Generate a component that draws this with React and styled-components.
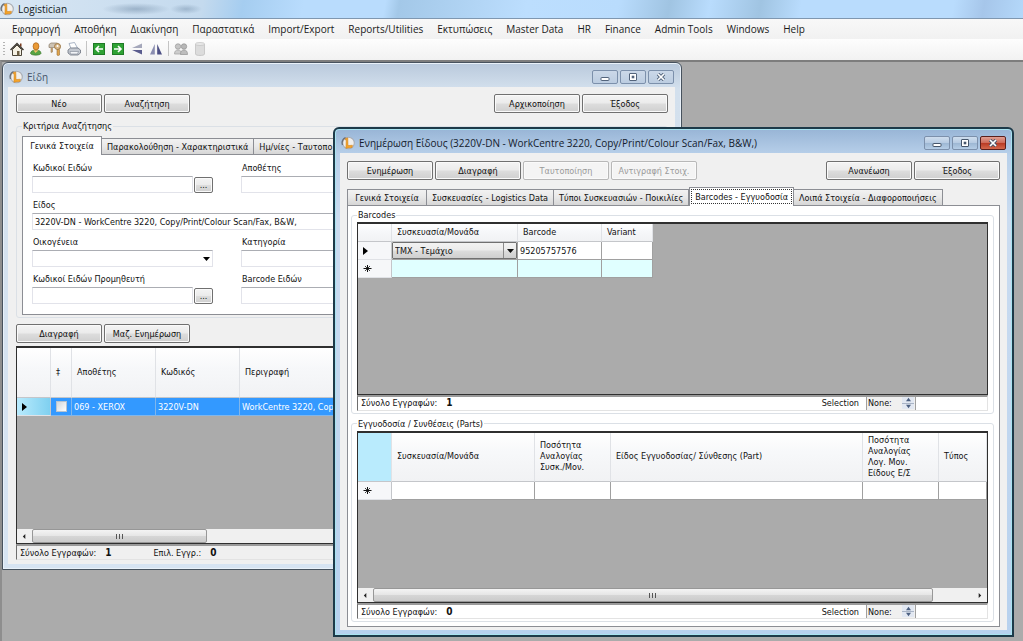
import React, { useState } from "react";
import styled, { createGlobalStyle, css } from "styled-components";

const GlobalStyle = createGlobalStyle`
  * {
    box-sizing: border-box;
  }
  body {
    margin: 0;
    font-family: "DejaVu Sans Condensed", "Liberation Sans", Arial, sans-serif;
    font-size: 9px;
    line-height: 12px;
    color: #111;
    background: #ababab;
  }
  button, input, select {
    font: inherit;
    color: inherit;
  }
`;

const uiFont = '"Open Sans", "Noto Sans", sans-serif';

const Shell = styled.div`
  display: flex;
  flex-direction: column;
  min-height: 100vh;
`;

const AppTitle = styled.header`
  display: flex;
  align-items: center;
  gap: 4px;
  height: 19px;
  border-bottom: 1px solid #7f97b0;
  font-family: ${uiFont};
  font-size: 10px;
  color: #101820;
  background:
    radial-gradient(ellipse 34px 6px at 136px 9px, rgba(84, 112, 142, 0.4), transparent),
    radial-gradient(ellipse 16px 5px at 186px 9px, rgba(84, 112, 142, 0.35), transparent),
    linear-gradient(100deg, #d8e6f3 0, #c4daee 200px, #a5cdf0 240px, #b9dcfd 300px, #b9dcfd 380px, #a3c8e8 394px, #b2d5f5 470px, #bcdefe 520px, #b9dcfd 610px, #a0c4e2 660px, #b9dcfd 700px, #a0c4e2 750px, #b9dcfd 790px, #b9dcfd 940px, #a6c6ea 970px, #b4d8fa 100%);
`;

const MenuBar = styled.nav`
  display: flex;
  align-items: center;
  gap: 14px;
  height: 20px;
  padding-left: 12px;
  font-family: ${uiFont};
  font-size: 10px;
  background: linear-gradient(#f8f8f8, #f1f1f1);
`;

const MenuItem = styled.a`
  color: #1a1a1a;
  text-decoration: none;
  white-space: nowrap;
`;

const Toolbar = styled.div`
  display: flex;
  align-items: center;
  gap: 5px;
  height: 21px;
  padding: 0 0 2px 3px;
  background: linear-gradient(#fdfdfd, #f2f2f2);
`;

const Grip = styled.span`
  width: 2px;
  height: 14px;
  background: repeating-linear-gradient(#b4b4b4 0 1px, transparent 1px 3px);
`;

const ToolButton = styled.button`
  display: flex;
  width: 14px;
  height: 16px;
  padding: 1px 0;
  border: 0;
  background: none;
`;

const ToolDivider = styled.span`
  width: 1px;
  height: 15px;
  background: #c4c4c4;
`;

const Desktop = styled.main`
  position: relative;
  flex: 1;
  min-height: 580px;
  border-top: 2px solid #7d7d7d;
  border-left: 2px solid #8e8e8e;
  background: #ababab;
  overflow: hidden;
`;

const Window = styled.section`
  position: absolute;
  display: flex;
  flex-direction: column;
  padding: 0 6px 5px 5px;
  border: 1px solid #47525e;
  border-radius: 6px 6px 0 0;
  background: linear-gradient(#b9c9dc, #d3e0ed 26px, #d7e4f2);
  box-shadow: inset 0 0 0 1px #e9f1f9;

  ${(p) =>
    p.$active &&
    css`
      border: 2px solid #1d3a49;
      padding: 0 5px 5px 5px;
      background: linear-gradient(#98b5d6, #b8d0ea 26px, #cbdcf0 90px, #b7d1ee);
      box-shadow: inset 0 0 0 1px #a9e3f0;
    `}
`;

const ItemsWindow = styled(Window)`
  top: 0;
  left: 0;
  bottom: 71px;
  width: 680px;
  max-width: 100%;
`;

const EditWindow = styled(Window)`
  top: 65px;
  left: 331px;
  right: 9px;
  bottom: 4px;
`;

const WindowTitle = styled.header`
  display: flex;
  align-items: center;
  gap: 4px;
  height: 24px;
  padding: 4px 1px 0 1px;
  font-family: ${uiFont};
  font-size: 10px;
  color: ${(p) => (p.$active ? "#14202c" : "#46566a")};

  h2 {
    flex: 1;
    margin: 0;
    font-size: inherit;
    font-weight: 400;
    white-space: nowrap;
  }
`;

const CaptionButton = styled.button`
  display: flex;
  align-items: center;
  justify-content: center;
  width: 26px;
  height: 14px;
  margin-left: -2px;
  padding: 0;
  border: 1px solid ${(p) => (p.$danger ? "#5a1f1c" : "#7c90ab")};
  border-radius: 2px;
  background: ${(p) =>
    p.$danger
      ? "linear-gradient(#e0a095, #cf6a58 48%, #b93a24 52%, #d4684c)"
      : p.$active
      ? "linear-gradient(#cfdeee, #b7cbe2 48%, #9db7d3 52%, #b5cde6)"
      : "linear-gradient(#cbd8e8, #bccde1)"};
`;

const WindowBody = styled.div`
  flex: 1;
  display: flex;
  flex-direction: column;
  min-height: 0;
  padding: ${(p) => (p.$active ? "8px 7px 3px" : "7px 7px 4px 8px")};
  background: #f0f0f0;
`;

const ButtonRow = styled.div`
  display: flex;
  gap: 2px;
`;

const Spacer = styled.span`
  flex: 1;
`;

const PushButton = styled.button`
  width: 86px;
  height: 19px;
  padding: 0;
  border: 1px solid #707070;
  border-radius: 2px;
  background: linear-gradient(#f4f4f4, #ebebeb 48%, #dddddd 52%, #cfcfcf);
  box-shadow: inset 0 0 0 1px #fafafa;
  white-space: nowrap;

  &:disabled {
    color: #9a9a9a;
    border-color: #b8b8b8;
    background: #f4f4f4;
  }
`;

const Group = styled.fieldset`
  display: flex;
  flex-direction: column;
  min-width: 0;
  min-height: 0;
  margin: 0;
  padding: ${(p) => p.$pad || "1px 5px 2px"};
  border: 1px solid #dbe0e6;
  border-radius: 3px;
  flex: ${(p) => (p.$grow ? "1 1 0" : "none")};

  legend {
    padding: 0 1px;
    white-space: nowrap;
  }
`;

const TabList = styled.div`
  display: flex;
  align-items: flex-end;
  height: 18px;
`;

const Tab = styled.button`
  min-width: 80px;
  height: 16px;
  padding: 0 5px;
  border: 1px solid #8c8e94;
  border-left-width: ${(p) => (p.$first || p.$selected ? "1px" : "0")};
  border-bottom: 0;
  background: linear-gradient(#f2f2f2, #e8e8e8 50%, #d6d6d6);
  white-space: nowrap;

  ${(p) =>
    p.$selected &&
    css`
      height: 19px;
      margin-bottom: -1px;
      padding-bottom: 1px;
      background: #fff;
      z-index: 1;
    `}
  ${(p) =>
    p.$focused &&
    css`
      outline: 1px dotted #333;
      outline-offset: -3px;
    `}
`;

const TabPanel = styled.div`
  display: flex;
  flex-direction: column;
  flex: 1;
  min-height: 0;
  padding: ${(p) => p.$pad};
  border: 1px solid #8c8e94;
  background: #fff;
`;

const FieldGrid = styled.div`
  display: grid;
  grid-template-columns: 181px 1fr;
  column-gap: 28px;
  row-gap: 6px;
`;

const Field = styled.div`
  display: flex;
  flex-direction: column;
  gap: 1px;
  grid-column: ${(p) => (p.$wide ? "1 / -1" : "auto")};

  label {
    padding-left: 1px;
    line-height: 13px;
  }
`;

const InputRow = styled.div`
  position: relative;
  display: flex;
  align-items: center;
  gap: 1px;
  height: 17px;
`;

const TextInput = styled.input`
  flex: 1;
  min-width: 0;
  height: 17px;
  padding: 0 2px;
  border: 1px solid #e2e3ea;
  border-top-color: #abadb3;
  background: #fff;
`;

const LookupButton = styled(PushButton)`
  width: 19px;
  height: 16px;
  line-height: 10px;
`;

const Select = styled.select`
  appearance: none;
  width: 100%;
  height: 17px;
  padding: 0 14px 0 2px;
  border: 1px solid #e2e3ea;
  border-top-color: #abadb3;
  border-radius: 0;
  background: #fff;
`;

const SelectArrow = styled.svg`
  position: absolute;
  right: 3px;
  top: 7px;
  pointer-events: none;
`;

const GridFrame = styled.div`
  display: flex;
  flex-direction: column;
  flex: 1;
  min-height: 0;
  border: 1px solid #2f2f2f;
  border-top-width: 2px;
  background: #ababab;
  overflow: hidden;
`;

const GridArea = styled.div`
  flex: 1;
  min-height: 0;
  overflow: hidden;
`;

const DataTable = styled.table`
  width: ${(p) => p.$width};
  table-layout: fixed;
  border-collapse: separate;
  border-spacing: 0;

  th, td {
    padding: 0 2px;
    overflow: hidden;
    white-space: nowrap;
    text-align: left;
    font-weight: 400;
    border-right: 1px solid #a0a0a0;
    border-bottom: 1px solid #a0a0a0;
  }
  thead th {
    height: ${(p) => p.$head}px;
    padding: 0 5px;
    line-height: 11px;
    white-space: pre-line;
    border-right-color: #e0e2e6;
    border-bottom-color: #c4c6ca;
    background: linear-gradient(#ffffff, #f7f8fa 40%, #f1f2f4);
  }
  tbody td, tbody th {
    height: 18px;
    background: #fff;
  }
  tbody th {
    padding: 0 5px;
    border-right-color: #c4c6ca;
    border-bottom-color: #e0e2e6;
    background: #f6f7f9;
  }
  thead th.corner {
    background: #b9ebfd;
  }
  tr.fresh td {
    background: #e0ffff;
  }
  tr.selected td {
    color: #fff;
    background: #3399ff;
    border-right-color: #7fb6ec;
    border-bottom-color: #7fb6ec;
  }
  tr.selected th {
    background: linear-gradient(90deg, #b9ebfd, #7fd0f0);
  }
  input[type="checkbox"] {
    appearance: none;
    display: block;
    width: 11px;
    height: 11px;
    margin: 0 auto;
    border: 1px solid #b8c4d0;
    background: linear-gradient(135deg, #d2d6da, #fff);
  }
  td svg, th svg {
    display: block;
  }
`;

const CellSelect = styled.div`
  position: relative;
  margin: 0 -2px;

  select {
    appearance: none;
    display: block;
    width: 100%;
    height: 17px;
    padding: 0 14px 0 2px;
    border: 1px solid #707070;
    border-radius: 1px;
    background: linear-gradient(#f2f2f2, #ebebeb 48%, #dddddd 52%, #cfcfcf);
  }
  svg {
    position: absolute;
    right: 3px;
    top: 7px;
    pointer-events: none;
  }
  &::after {
    content: "";
    position: absolute;
    right: 13px;
    top: 1px;
    bottom: 1px;
    width: 1px;
    background: #8a8a8a;
    pointer-events: none;
  }
`;

const ScrollTrack = styled.div`
  display: flex;
  height: 14px;
  background: #f0f0f0;
`;

const ScrollArrow = styled.button`
  display: flex;
  align-items: center;
  justify-content: center;
  width: 15px;
  padding: 0;
  border: 0;
  background: none;
`;

const ScrollThumb = styled.div`
  display: flex;
  align-items: center;
  justify-content: center;
  gap: 2px;
  width: ${(p) => p.$width};
  border: 1px solid #979797;
  border-radius: 2px;
  background: linear-gradient(#f4f4f4, #e6e6e6 48%, #d6d6d6 52%, #cbcbcb);

  i {
    width: 1px;
    height: 5px;
    background: #555;
  }
`;

const StatusBar = styled.div`
  display: flex;
  align-items: center;
  height: 16px;
  padding-left: 3px;
  border: 1px solid #e3e3e3;
  border-top: 2px solid #9a9a9a;
  border-left: 1px solid #6e6e6e;
  background: ${(p) => p.$fill || "#fff"};
  white-space: nowrap;

  b {
    margin: 0 42px 0 9px;
    font-size: 10px;
  }
`;

const Spinner = styled.div`
  display: flex;
  width: 50px;
  height: 13px;
  margin: 0 71px 0 7px;
  border-left: 1px solid #a0a0a0;
  border-right: 1px solid #a0a0a0;
  background: #f0f0f0;

  input {
    width: 34px;
    padding: 0 1px;
    border: 0;
    background: none;
  }
`;

const SpinButtons = styled.div`
  display: flex;
  flex-direction: column;
  margin-left: 1px;

  button {
    display: flex;
    align-items: center;
    justify-content: center;
    width: 12px;
    height: 6px;
    padding: 0;
    border: 0;
    background: #e2e8f2;
  }
  button + button {
    border-top: 1px solid #a9b4c6;
  }
`;

function Logo({ size = 14 }) {
  return (
    <svg width={size} height={size} viewBox="0 0 14 14" aria-hidden="true">
      <circle cx="7.500" cy="7" r="5.800" fill="#f1efec" stroke="#a9adb4" strokeWidth="1.100" />
      <path d="M4.500 1.500A6.300 6.300 0 0 0 1.500 9" fill="none" stroke="#6a6f78" strokeWidth="1.300" />
      <path d="M4.500 2.300 6.800 1.900l.2 7.700 4.400-.4-.3 2.200-6.200.9.300-8.600-1 .2z" fill="#f4a42a" stroke="#c87c1c" strokeWidth=".5" />
    </svg>
  );
}

function DownArrow() {
  return (
    <svg width="7" height="4" viewBox="0 0 7 4" aria-hidden="true">
      <path d="M0 0h7L3.500 4z" fill="#111" />
    </svg>
  );
}

function Triangle({ dir, size = 5, fill = "#222" }) {
  const paths = {
    left: "M4 0v6L1 3z",
    right: "M2 0v6l3-3z",
    up: "M0 5h6L3 1z",
    down: "M0 1h6L3 5z",
  };
  return (
    <svg width={size} height={size} viewBox="0 0 6 6" aria-hidden="true">
      <path d={paths[dir]} fill={fill} />
    </svg>
  );
}

function RowPointer() {
  return (
    <svg width="5" height="8" viewBox="0 0 5 8" aria-label="current row">
      <path d="M0 0v8l5-4z" fill="#000" />
    </svg>
  );
}

function NewRowMark() {
  return (
    <svg width="9" height="9" viewBox="0 0 9 9" aria-label="new row">
      <path d="M4.500 1v7M.5 4.500h8" stroke="#111" />
      <path d="M2 2l5 5M7 2 2 7" stroke="#111" strokeWidth=".8" />
    </svg>
  );
}

const toolIcons = {
  home: (
    <>
      <path d="M2.500 7.500v6h9v-6L7 3z" fill="#f5f1e4" stroke="#4a4438" />
      <path d="M.5 8 7 1.500 13.500 8" fill="none" stroke="#3e3a33" strokeWidth="1.500" />
      <path d="M10 1.500h1.500V5L10 3.600z" fill="#7a3d20" />
      <path d="M7 9h2.500v4.500H7z" fill="#6d5f45" />
    </>
  ),
  user: (
    <>
      <path d="M1.500 11.500C1.500 9 4 8 7 8s5 1 5 3.500c-1 2.200-9.500 2.200-10.500 0z" fill="#57a344" stroke="#2f6d22" strokeWidth=".6" />
      <path d="M4.500 8.200 6.500 11l3-2.800" fill="#f3c16a" />
      <ellipse cx="7" cy="4.300" rx="2.900" ry="3.600" fill="#ea9a35" stroke="#a85f12" strokeWidth=".7" />
    </>
  ),
  keys: (
    <>
      <path d="M1 2.500 3 1h6l3 2v3.500H8.500L7 5.500H1z" fill="#cdc3b4" stroke="#8c7d68" strokeWidth=".7" />
      <circle cx="9.500" cy="4.500" r="3" fill="#d9b98c" stroke="#97703a" strokeWidth=".8" />
      <circle cx="9.500" cy="4" r="1" fill="#fff" />
      <path d="M9 7.500h2.500v5.500l-1.200.8L9 13z" fill="#e0a34a" stroke="#97703a" strokeWidth=".6" />
      <path d="M3 6v4.500l1.500-.5V6" fill="#cfa46a" stroke="#98815f" strokeWidth=".6" />
    </>
  ),
  printer: (
    <>
      <path d="M4 6.500 2 1.500 7.500.5 10.500 6z" fill="#fff" stroke="#8797ad" strokeWidth=".7" />
      <path d="M1 8 3.500 6H11l2.500 2v3L11 13H3.500L1 11z" fill="#c3c8d0" stroke="#6d7480" strokeWidth=".8" />
      <path d="M3 9.500h8.500L10.500 12h-7z" fill="#f2f4f7" stroke="#7f8793" strokeWidth=".6" />
    </>
  ),
  back: (
    <>
      <rect x="1.500" y="1.500" width="11" height="11" fill="#2fa234" stroke="#1f7a26" />
      <path d="M11 7H4.500M7 4 4 7l3 3" fill="none" stroke="#fff" strokeWidth="1.600" />
    </>
  ),
  forward: (
    <>
      <rect x="1.500" y="1.500" width="11" height="11" fill="#2fa234" stroke="#1f7a26" />
      <path d="M3 7h6.500M7 4l3 3-3 3" fill="none" stroke="#fff" strokeWidth="1.600" />
    </>
  ),
  flip: (
    <>
      <path d="M12 1.500V6H2z" fill="#a5a8bb" />
      <path d="M12 12.500V8H2z" fill="#5a5c8e" />
    </>
  ),
  mirror: (
    <>
      <path d="M1 12.500h4.800V2z" fill="#8a8db0" />
      <path d="M13 12.500H8.200V2z" fill="#4c4f84" />
    </>
  ),
  users: (
    <>
      <circle cx="4" cy="4.500" r="2.700" fill="#c6c6c6" stroke="#a0a0a0" strokeWidth=".8" />
      <path d="M.5 12c0-3 1.500-4 3.500-4s3.500 1 3.500 4z" fill="#cccccc" stroke="#a6a6a6" strokeWidth=".8" />
      <circle cx="10" cy="4.500" r="2.700" fill="#b8b8b8" stroke="#989898" strokeWidth=".8" />
      <path d="M6.500 12.500c0-3.200 1.300-4.500 3.500-4.500s3.500 1.300 3.500 4.500z" fill="#bdbdbd" stroke="#9b9b9b" strokeWidth=".8" />
    </>
  ),
  database: (
    <>
      <path d="M2.500 2v10c0 2 9 2 9 0V2z" fill="#dcdcdc" stroke="#c2c2c2" strokeWidth=".8" />
      <ellipse cx="7" cy="2" rx="4.500" ry="1.400" fill="#ededed" stroke="#c2c2c2" strokeWidth=".8" />
    </>
  ),
};

const toolGroups = [
  ["home", "user", "keys", "printer"],
  ["back", "forward", "flip", "mirror"],
  ["users", "database"],
];

const menus = [
  "Εφαρμογή",
  "Αποθήκη",
  "Διακίνηση",
  "Παραστατικά",
  "Import/Export",
  "Reports/Utilities",
  "Εκτυπώσεις",
  "Master Data",
  "HR",
  "Finance",
  "Admin Tools",
  "Windows",
  "Help",
];

function CaptionButtons({ active }) {
  const ink = active ? "#46566b" : "#53647c";
  return (
    <>
      <CaptionButton $active={active} aria-label="Minimize">
        <svg width="10" height="8" viewBox="0 0 10 8">
          <rect x="1" y="4.500" width="8" height="3" rx=".5" fill="#fff" stroke={ink} />
        </svg>
      </CaptionButton>
      <CaptionButton $active={active} aria-label="Maximize">
        <svg width="10" height="8" viewBox="0 0 10 8">
          <rect x="1.500" y=".5" width="7" height="7" rx=".5" fill="#fff" stroke={ink} />
          <rect x="4" y="3" width="2" height="2" fill={ink} stroke={ink} strokeWidth=".6" />
        </svg>
      </CaptionButton>
      <CaptionButton $active={active} $danger={active} aria-label="Close">
        <svg width="10" height="8" viewBox="0 0 10 8">
          <path d="M2 1l6 6M8 1 2 7" stroke={ink} strokeWidth="3.400" />
          <path d="M2 1l6 6M8 1 2 7" stroke="#fff" strokeWidth="1.700" />
        </svg>
      </CaptionButton>
    </>
  );
}

function Scrollbar({ thumb }) {
  return (
    <ScrollTrack>
      <ScrollArrow aria-label="Scroll left">
        <Triangle dir="left" />
      </ScrollArrow>
      <ScrollThumb $width={thumb}>
        <i />
        <i />
        <i />
      </ScrollThumb>
      <Spacer />
      <ScrollArrow aria-label="Scroll right">
        <Triangle dir="right" />
      </ScrollArrow>
    </ScrollTrack>
  );
}

function GridStatus({ id, total }) {
  return (
    <StatusBar>
      Σύνολο Εγγραφών: <b>{total}</b>
      <Spacer />
      <label htmlFor={id}>Selection</label>
      <Spinner>
        <input id={id} defaultValue="None:" readOnly />
        <SpinButtons>
          <button aria-label="Next">
            <Triangle dir="up" fill="#4b5f80" />
          </button>
          <button aria-label="Previous">
            <Triangle dir="down" fill="#4b5f80" />
          </button>
        </SpinButtons>
      </Spinner>
    </StatusBar>
  );
}

function Columns({ widths }) {
  return (
    <colgroup>
      {widths.map((w, i) => (
        <col key={i} style={w ? { width: w } : undefined} />
      ))}
    </colgroup>
  );
}

function LookupField({ id, label }) {
  return (
    <Field>
      <label htmlFor={id}>{label}</label>
      <InputRow>
        <TextInput id={id} />
        <LookupButton aria-label={label}>...</LookupButton>
      </InputRow>
    </Field>
  );
}

function PlainField({ id, label, value = "", wide }) {
  return (
    <Field $wide={wide}>
      <label htmlFor={id}>{label}</label>
      <InputRow>
        <TextInput id={id} defaultValue={value} />
      </InputRow>
    </Field>
  );
}

function Tabs({ items, initial, focused }) {
  const [current, setCurrent] = useState(initial);
  return (
    <TabList role="tablist">
      {items.map((name, i) => (
        <Tab
          key={name}
          role="tab"
          aria-selected={i === current}
          $first={i === 0}
          $selected={i === current}
          $focused={focused && i === current}
          onClick={() => setCurrent(i)}
        >
          {name}
        </Tab>
      ))}
    </TabList>
  );
}

const SearchGroup = styled(Group)`
  margin: 7px 0 6px;
`;

const GridActions = styled(ButtonRow)`
  margin-bottom: 3px;
`;

const EditActions = styled(ButtonRow)`
  margin-bottom: 7px;
`;

const PartsGroup = styled(Group)`
  margin-top: 4px;
`;

function Items() {
  return (
    <ItemsWindow>
      <WindowTitle>
        <Logo />
        <h2>Είδη</h2>
        <CaptionButtons />
      </WindowTitle>
      <WindowBody>
        <ButtonRow>
          <PushButton>Νέο</PushButton>
          <PushButton>Αναζήτηση</PushButton>
          <Spacer />
          <PushButton>Αρχικοποίηση</PushButton>
          <PushButton>Έξοδος</PushButton>
        </ButtonRow>
        <SearchGroup $pad="4px 5px 2px">
          <legend>Κριτήρια Αναζήτησης</legend>
          <Tabs
            initial={0}
            items={["Γενικά Στοιχεία", "Παρακολούθηση - Χαρακτηριστικά", "Ημ/νίες - Ταυτοπο"]}
          />
          <TabPanel $pad="7px 9px 10px">
            <FieldGrid>
              <LookupField id="codes" label="Κωδικοί Ειδών" />
              <PlainField id="depositor" label="Αποθέτης" />
              <PlainField
                wide
                id="item"
                label="Είδος"
                value="3220V-DN - WorkCentre 3220, Copy/Print/Colour Scan/Fax, B&W,"
              />
              <Field>
                <label htmlFor="family">Οικογένεια</label>
                <InputRow>
                  <Select id="family" />
                  <SelectArrow width="7" height="4" viewBox="0 0 7 4">
                    <path d="M0 0h7L3.500 4z" fill="#000" />
                  </SelectArrow>
                </InputRow>
              </Field>
              <PlainField id="category" label="Κατηγορία" />
              <LookupField id="supplier" label="Κωδικοί Ειδών Προμηθευτή" />
              <PlainField id="barcode" label="Barcode Ειδών" />
            </FieldGrid>
          </TabPanel>
        </SearchGroup>
        <GridActions>
          <PushButton>Διαγραφή</PushButton>
          <PushButton>Μαζ. Ενημέρωση</PushButton>
        </GridActions>
        <GridFrame>
          <GridArea>
            <DataTable $width="100%" $head={50}>
              <Columns widths={[34, 21, 84, 84, 120, null]} />
              <thead>
                <tr>
                  <th />
                  <th>‡</th>
                  <th>Αποθέτης</th>
                  <th>Κωδικός</th>
                  <th>Περιγραφή</th>
                  <th />
                </tr>
              </thead>
              <tbody>
                <tr className="selected">
                  <th>
                    <RowPointer />
                  </th>
                  <td>
                    <input type="checkbox" aria-label="069 - XEROX" />
                  </td>
                  <td>069 - XEROX</td>
                  <td>3220V-DN</td>
                  <td>WorkCentre 3220, Cop</td>
                  <td />
                </tr>
              </tbody>
            </DataTable>
          </GridArea>
          <Scrollbar thumb="175px" />
        </GridFrame>
        <StatusBar $fill="#f0f0f0">
          Σύνολο Εγγραφών: <b>1</b>
          Επιλ. Εγγρ.: <b>0</b>
        </StatusBar>
      </WindowBody>
    </ItemsWindow>
  );
}

function EditItem() {
  return (
    <EditWindow $active>
      <WindowTitle $active>
        <Logo />
        <h2>Ενημέρωση Είδους (3220V-DN - WorkCentre 3220, Copy/Print/Colour Scan/Fax, B&W,)</h2>
        <CaptionButtons active />
      </WindowTitle>
      <WindowBody $active>
        <EditActions>
          <PushButton>Ενημέρωση</PushButton>
          <PushButton>Διαγραφή</PushButton>
          <PushButton disabled>Ταυτοποίηση</PushButton>
          <PushButton disabled>Αντιγραφή Στοιχ.</PushButton>
          <Spacer />
          <PushButton>Ανανέωση</PushButton>
          <PushButton>Έξοδος</PushButton>
        </EditActions>
        <Tabs
          focused
          initial={3}
          items={[
            "Γενικά Στοιχεία",
            "Συσκευασίες - Logistics Data",
            "Τύποι Συσκευασιών - Ποικιλίες",
            "Barcodes - Εγγυοδοσία",
            "Λοιπά Στοιχεία - Διαφοροποιήσεις",
          ]}
        />
        <TabPanel $pad="3px 5px 4px 3px">
          <Group $grow>
            <legend>Barcodes</legend>
            <GridFrame>
              <GridArea>
                <DataTable $width="295px" $head={18}>
                  <Columns widths={[34, 126, 84, 51]} />
                  <thead>
                    <tr>
                      <th />
                      <th>Συσκευασία/Μονάδα</th>
                      <th>Barcode</th>
                      <th>Variant</th>
                    </tr>
                  </thead>
                  <tbody>
                    <tr>
                      <th>
                        <RowPointer />
                      </th>
                      <td>
                        <CellSelect>
                          <select aria-label="Συσκευασία/Μονάδα">
                            <option>ΤΜΧ - Τεμάχιο</option>
                          </select>
                          <DownArrow />
                        </CellSelect>
                      </td>
                      <td>95205757576</td>
                      <td />
                    </tr>
                    <tr className="fresh">
                      <th>
                        <NewRowMark />
                      </th>
                      <td />
                      <td />
                      <td />
                    </tr>
                  </tbody>
                </DataTable>
              </GridArea>
            </GridFrame>
            <GridStatus id="barcode-selection" total="1" />
          </Group>
          <PartsGroup $grow>
            <legend>Εγγυοδοσία / Συνθέσεις (Parts)</legend>
            <GridFrame>
              <GridArea>
                <DataTable $width="100%" $head={49}>
                  <Columns widths={[34, 143, 76, null, 76, 48]} />
                  <thead>
                    <tr>
                      <th className="corner" />
                      <th>Συσκευασία/Μονάδα</th>
                      <th>{"Ποσότητα\nΑναλογίας\nΣυσκ./Μον."}</th>
                      <th>Είδος Εγγυοδοσίας/ Σύνθεσης (Part)</th>
                      <th>{"Ποσότητα\nΑναλογίας\nΛογ. Μον.\nΕίδους Ε/Σ"}</th>
                      <th>Τύπος</th>
                    </tr>
                  </thead>
                  <tbody>
                    <tr>
                      <th>
                        <NewRowMark />
                      </th>
                      <td />
                      <td />
                      <td />
                      <td />
                      <td />
                    </tr>
                  </tbody>
                </DataTable>
              </GridArea>
              <Scrollbar thumb="89%" />
            </GridFrame>
            <GridStatus id="parts-selection" total="0" />
          </PartsGroup>
        </TabPanel>
      </WindowBody>
    </EditWindow>
  );
}

const App = () => {
  return (
    <>
      <GlobalStyle />
      <Shell>
        <AppTitle>
          <Logo />
          Logistician
        </AppTitle>
        <MenuBar>
          {menus.map((name) => (
            <MenuItem key={name} href="#">
              {name}
            </MenuItem>
          ))}
        </MenuBar>
        <Toolbar>
          <Grip />
          {toolGroups.map((group, i) => (
            <React.Fragment key={i}>
              {i > 0 && <ToolDivider />}
              {group.map((name) => (
                <ToolButton key={name} aria-label={name}>
                  <svg width="14" height="14" viewBox="0 0 14 14">
                    {toolIcons[name]}
                  </svg>
                </ToolButton>
              ))}
            </React.Fragment>
          ))}
        </Toolbar>
        <Desktop>
          <Items />
          <EditItem />
        </Desktop>
      </Shell>
    </>
  );
};

export default App;
